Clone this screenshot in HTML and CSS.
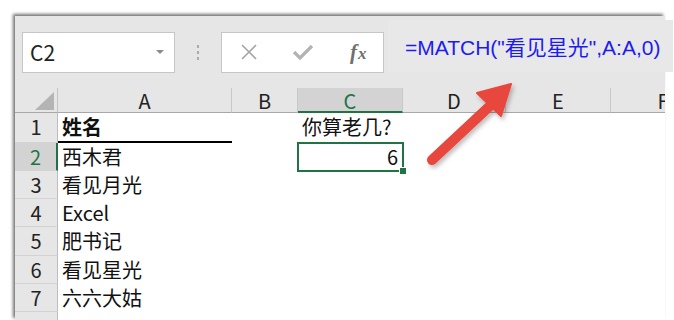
FILE: index.html
```html
<!DOCTYPE html>
<html lang="zh-CN">
  <head>
    <meta charset="UTF-8" />
    <title>MATCH</title>
    <link rel="stylesheet" href="styles.css">
  </head>
  <body>
    <div class="window">
      <div class="formula-bar">
        <div class="name-box">
          <span>C2</span>
          <span class="caret"></span>
        </div>
        <div class="grip"><i></i><i></i><i></i></div>
        <div class="buttons">
          <svg class="icon" width="18" height="18" viewBox="0 0 18 18">
            <path d="M2 2 L16 16 M16 2 L2 16" stroke="#a6a6a6" stroke-width="1.6" fill="none" />
          </svg>
          <svg class="icon" width="22" height="18" viewBox="0 0 22 18">
            <path d="M2 9 L8 15 L20 3" stroke="#b3b3b3" stroke-width="3.2" fill="none" />
          </svg>
          <span class="fx"><i>f</i><i>x</i></span>
        </div>
      </div>

      <div class="sheet">
        <div class="corner"><span class="tri"></span></div>
        <div class="colhead">A</div>
        <div class="colhead">B</div>
        <div class="colhead active">C</div>
        <div class="colhead">D</div>
        <div class="colhead">E</div>
        <div class="colhead">F</div>

        <div class="rowhead">1</div>
        <div class="cell title">姓名</div>
        <div class="cell"></div>
        <div class="cell">你算老几?</div>
        <div class="cell"></div>
        <div class="cell"></div>
        <div class="cell"></div>

        <div class="rowhead active">2</div>
        <div class="cell">西木君</div>
        <div class="cell"></div>
        <div class="cell selected">6</div>
        <div class="cell"></div>
        <div class="cell"></div>
        <div class="cell"></div>

        <div class="rowhead">3</div>
        <div class="cell">看见月光</div>
        <div class="cell"></div>
        <div class="cell"></div>
        <div class="cell"></div>
        <div class="cell"></div>
        <div class="cell"></div>

        <div class="rowhead">4</div>
        <div class="cell">Excel</div>
        <div class="cell"></div>
        <div class="cell"></div>
        <div class="cell"></div>
        <div class="cell"></div>
        <div class="cell"></div>

        <div class="rowhead">5</div>
        <div class="cell">肥书记</div>
        <div class="cell"></div>
        <div class="cell"></div>
        <div class="cell"></div>
        <div class="cell"></div>
        <div class="cell"></div>

        <div class="rowhead">6</div>
        <div class="cell">看见星光</div>
        <div class="cell"></div>
        <div class="cell"></div>
        <div class="cell"></div>
        <div class="cell"></div>
        <div class="cell"></div>

        <div class="rowhead">7</div>
        <div class="cell">六六大姑</div>
        <div class="cell"></div>
        <div class="cell"></div>
        <div class="cell"></div>
        <div class="cell"></div>
        <div class="cell"></div>

        <div class="rowhead"></div>
        <div class="cell"></div>
        <div class="cell"></div>
        <div class="cell"></div>
        <div class="cell"></div>
        <div class="cell"></div>
        <div class="cell"></div>
      </div>
    </div>

    <!-- popup over the formula bar -->
    <div class="formula-popup">=MATCH("看见星光",A:A,0)</div>

    <svg class="arrow" width="674" height="320" viewBox="0 0 674 320">
      <defs>
        <filter id="shade" x="-20%" y="-20%" width="140%" height="140%">
          <feDropShadow dx="2" dy="3" stdDeviation="2" flood-color="#000" flood-opacity="0.25" />
        </filter>
      </defs>
      <g filter="url(#shade)" fill="#e8473d" stroke="#e8473d">
        <path d="M432 160 L492 104" stroke-width="10" stroke-linecap="round" fill="none" />
        <polygon points="511,84 477,93 501,116" stroke-width="2" stroke-linejoin="round" />
      </g>
    </svg>
  </body>
</html>
```

FILE: styles.css
```css
body {
  margin: 0;
  background: #fff;
  width: 674px;
  height: 320px;
  overflow: hidden;
  position: relative;
  font-family: "Noto Sans CJK SC", "Noto Sans", sans-serif;
}
.window {
  margin: 16px 0 0 15px;
  width: 650px;
  height: 304px;
  overflow: hidden;
  background: #e6e6e6;
  box-shadow: -2px -2px 3px rgba(0, 0, 0, 0.55);
}
.formula-bar {
  height: 72px;
  display: flex;
  align-items: center;
  padding-left: 7px;
}
.name-box {
  width: 153px;
  height: 41px;
  box-sizing: border-box;
  background: #fff;
  border: 1px solid #c6c6c6;
  display: flex;
  align-items: center;
  justify-content: space-between;
  padding: 0 10px 0 7px;
  font-size: 21px;
  color: #222;
}
.caret {
  width: 0;
  height: 0;
  border-left: 4px solid transparent;
  border-right: 4px solid transparent;
  border-top: 4px solid #8a8a8a;
}
.grip {
  width: 46px;
  display: flex;
  flex-direction: column;
  align-items: center;
  gap: 3px;
}
.grip i {
  width: 2px;
  height: 3px;
  background: #ababab;
}
.buttons {
  width: 163px;
  height: 41px;
  box-sizing: border-box;
  background: #fff;
  border: 1px solid #c6c6c6;
  display: flex;
  align-items: center;
  padding-left: 18px;
  gap: 34px;
}
.fx {
  font-family: "Liberation Serif", serif;
  font-weight: bold;
  font-size: 21px;
  color: #6f6f6f;
  margin-left: 2px;
}
.fx i + i {
  font-size: 17px;
  margin-left: 1px;
}
.formula-popup {
  position: absolute;
  left: 388px;
  top: 20px;
  width: 285px;
  height: 52px;
  box-sizing: border-box;
  background: #e8e8e8;
  padding: 11px 0 0 17px;
  font-family: "Liberation Sans", "Noto Sans CJK SC", sans-serif;
  font-size: 21px;
  color: #1c1cf2;
  white-space: nowrap;
}
.sheet {
  display: grid;
  grid-template-columns: 43px 174px 66px 105px 103px 105px 105px;
  grid-template-rows: 25px 30px 28px 28px 28px 29px 28px 28px 28px;
  background: #fff;
  font-size: 20px;
  color: #111;
}
.corner,
.colhead {
  background: #e6e6e6;
  border-bottom: 1px solid #a8a8a8;
  box-sizing: border-box;
}
.corner {
  position: relative;
  border-right: 1px solid #c4c4c4;
}
.tri {
  position: absolute;
  right: 3px;
  bottom: 2px;
  width: 0;
  height: 0;
  border-left: 19px solid transparent;
  border-bottom: 18px solid #b4b4b4;
}
.colhead {
  border-right: 1px solid #c8c8c8;
  text-align: center;
  line-height: 22px;
  padding-top: 2px;
  color: #222;
}
.colhead.active {
  background: #d3d3d3;
  color: #217346;
  border-bottom: 2px solid #217346;
}
.rowhead {
  background: #e6e6e6;
  border-right: 1px solid #bdbdbd;
  border-bottom: 1px solid #d3d3d3;
  box-sizing: border-box;
  text-align: center;
  line-height: 28px;
  color: #222;
}
.rowhead.active {
  background: #d3d3d3;
  color: #217346;
  border-right: 2px solid #217346;
}
.cell {
  padding: 0 4px;
  line-height: 28px;
  white-space: nowrap;
}
.cell.title {
  font-weight: bold;
  border-bottom: 2px solid #000;
}
.cell.selected {
  position: relative;
  text-align: right;
  outline: 2px solid #217346;
  outline-offset: -1px;
  padding-right: 5px;
}
.cell.selected::after {
  content: "";
  position: absolute;
  right: -4px;
  bottom: -4px;
  width: 6px;
  height: 6px;
  background: #217346;
  border: 1px solid #fff;
}
.arrow {
  position: absolute;
  left: 0;
  top: 0;
  pointer-events: none;
}
```
